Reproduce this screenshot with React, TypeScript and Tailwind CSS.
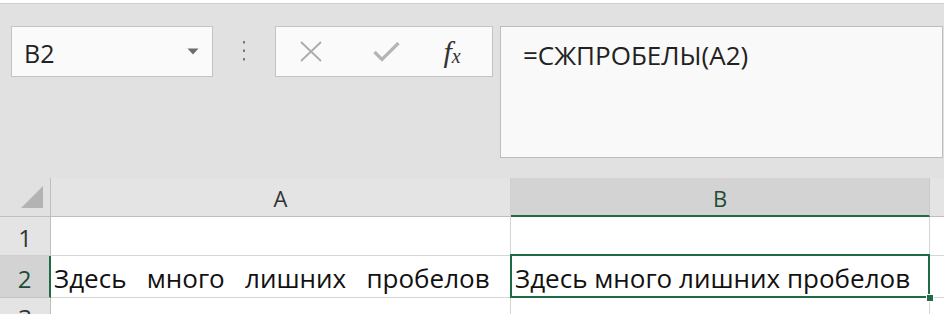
import React from "react";

const ui = { fontFamily: '"Open Sans", "Noto Sans", sans-serif' };

export default function App() {
  return (
    <div className="w-[944px] h-[314px] overflow-hidden bg-[#e1e1e1] text-[#222]" style={ui}>
      {/* top strip */}
      <div className="h-[4px] bg-white border-b border-[#cfcfcf]" />
      {/* formula area */}
      <div className="flex items-start pt-[22px] pl-[11px] h-[174px]">
        <div className="w-[202px] h-[51px] bg-[#fafafa] border border-[#c4c4c4] flex items-center justify-between pl-[12px] pr-[13px]">
          <span className="text-[25px] leading-none pt-[3px]">B2</span>
          <svg width="12" height="7" viewBox="0 0 12 7">
            <path d="M0.5 0.5 L11.5 0.5 L6 6.5 Z" fill="#6d6d6d" />
          </svg>
        </div>
        <div className="w-[62px] h-[51px] flex items-center justify-center">
          <svg width="4" height="22" viewBox="0 0 4 22">
            <rect x="1" y="0" width="2" height="2.5" fill="#7a7a7a" />
            <rect x="1" y="8.5" width="2" height="2.5" fill="#7a7a7a" />
            <rect x="1" y="17" width="2" height="2.5" fill="#7a7a7a" />
          </svg>
        </div>
        <div className="w-[218px] h-[51px] bg-[#fafafa] border border-[#c4c4c4] flex items-center">
          <div className="w-[72px] flex justify-center pr-[2px]">
            <svg width="24" height="21" viewBox="0 0 24 21">
              <path d="M2 1 L22 20 M22 1 L2 20" stroke="#ababab" strokeWidth="1.8" />
            </svg>
          </div>
          <div className="w-[74px] flex justify-center pl-[2px]">
            <svg width="27" height="21" viewBox="0 0 27 21">
              <path d="M1.5 11 L9 18.5 L25.5 2" stroke="#b5b5b5" strokeWidth="3.2" fill="none" />
            </svg>
          </div>
          <div className="flex-1 flex justify-center pr-[10px]">
            <span
              className="italic text-[30px] leading-none text-[#333]"
              style={{ fontFamily: '"Liberation Serif", "DejaVu Serif", serif' }}
            >
              f<span className="text-[20px] relative top-[1px]">x</span>
            </span>
          </div>
        </div>
        <div className="ml-[7px] w-[443px] h-[132px] bg-[#f9f9f9] border border-[#bdbdbd] pl-[22px] pt-[11px]">
          <span className="text-[26px] leading-[34px]">=СЖПРОБЕЛЫ(А2)</span>
        </div>
      </div>
      {/* grid */}
      <div>
        {/* header row */}
        <div className="flex h-[39px]">
          <div className="w-[51px] shrink-0 border-r border-[#bfbfbf] border-b border-b-[#bfbfbf] flex items-end justify-end pr-[6px] pb-[7px]">
            <svg width="23" height="23" viewBox="0 0 23 23">
              <path d="M0 22 L22 22 L22 0 Z" fill="#b3b3b3" />
            </svg>
          </div>
          <div className="w-[460px] shrink-0 border-r border-[#d0d0d0] border-b border-b-[#bfbfbf] bg-[#e4e4e4] flex items-center justify-center text-[22px] text-[#333] pt-[3px]">
            A
          </div>
          <div className="w-[419px] shrink-0 border-r border-[#c8c8c8] border-b-2 border-b-[#1f6b43] bg-[#d3d3d3] flex items-center justify-center text-[22px] text-[#1c4d33] pt-[3px]">
            B
          </div>
          <div className="flex-1 border-b border-[#bfbfbf] bg-[#e4e4e4]" />
        </div>
        {/* row 1 */}
        <div className="flex h-[39px] bg-white">
          <div className="w-[51px] shrink-0 bg-[#e4e4e4] border-r border-[#bfbfbf] border-b border-b-[#d0d0d0] flex items-center justify-center text-[24px] text-[#333] pt-[4px]">
            1
          </div>
          <div className="w-[460px] shrink-0 border-r border-b border-[#d6d6d6]" />
          <div className="w-[419px] shrink-0 border-r border-b border-[#d6d6d6]" />
          <div className="flex-1 border-b border-[#d6d6d6]" />
        </div>
        {/* row 2 */}
        <div className="flex h-[42px] bg-white">
          <div className="w-[51px] shrink-0 bg-[#d3d3d3] border-r-2 border-[#1f6b43] border-b border-b-[#c4c4c4] flex items-center justify-center text-[24px] text-[#1c4d33] pt-[4px]">
            2
          </div>
          <div className="w-[460px] shrink-0 border-r border-b border-[#d6d6d6] flex items-center pl-[3px] pt-[3px] text-[26px] text-[#111] whitespace-pre">
            {"Здесь   много   лишних   пробелов"}
          </div>
          <div className="w-[419px] shrink-0 border-r border-b border-[#d6d6d6] relative flex items-center pl-[4px] pt-[3px] text-[26px] text-[#111] whitespace-pre">
            {"Здесь много лишних пробелов"}
            <div className="absolute -left-[1px] -top-[2px] -right-[1px] -bottom-[1px] border-2 border-[#1f6b43] pointer-events-none" />
            <div className="absolute -right-[5px] -bottom-[5px] w-[8px] h-[8px] bg-[#1f6b43] border border-white" />
          </div>
          <div className="flex-1 border-b border-[#d6d6d6]" />
        </div>
        {/* row 3 */}
        <div className="flex h-[40px] bg-white">
          <div className="w-[51px] shrink-0 bg-[#e4e4e4] border-r border-[#bfbfbf] flex items-start justify-center text-[24px] text-[#333] pt-[2px]">
            3
          </div>
          <div className="w-[460px] shrink-0 border-r border-[#d6d6d6]" />
          <div className="w-[419px] shrink-0 border-r border-[#d6d6d6]" />
          <div className="flex-1" />
        </div>
      </div>
    </div>
  );
}
